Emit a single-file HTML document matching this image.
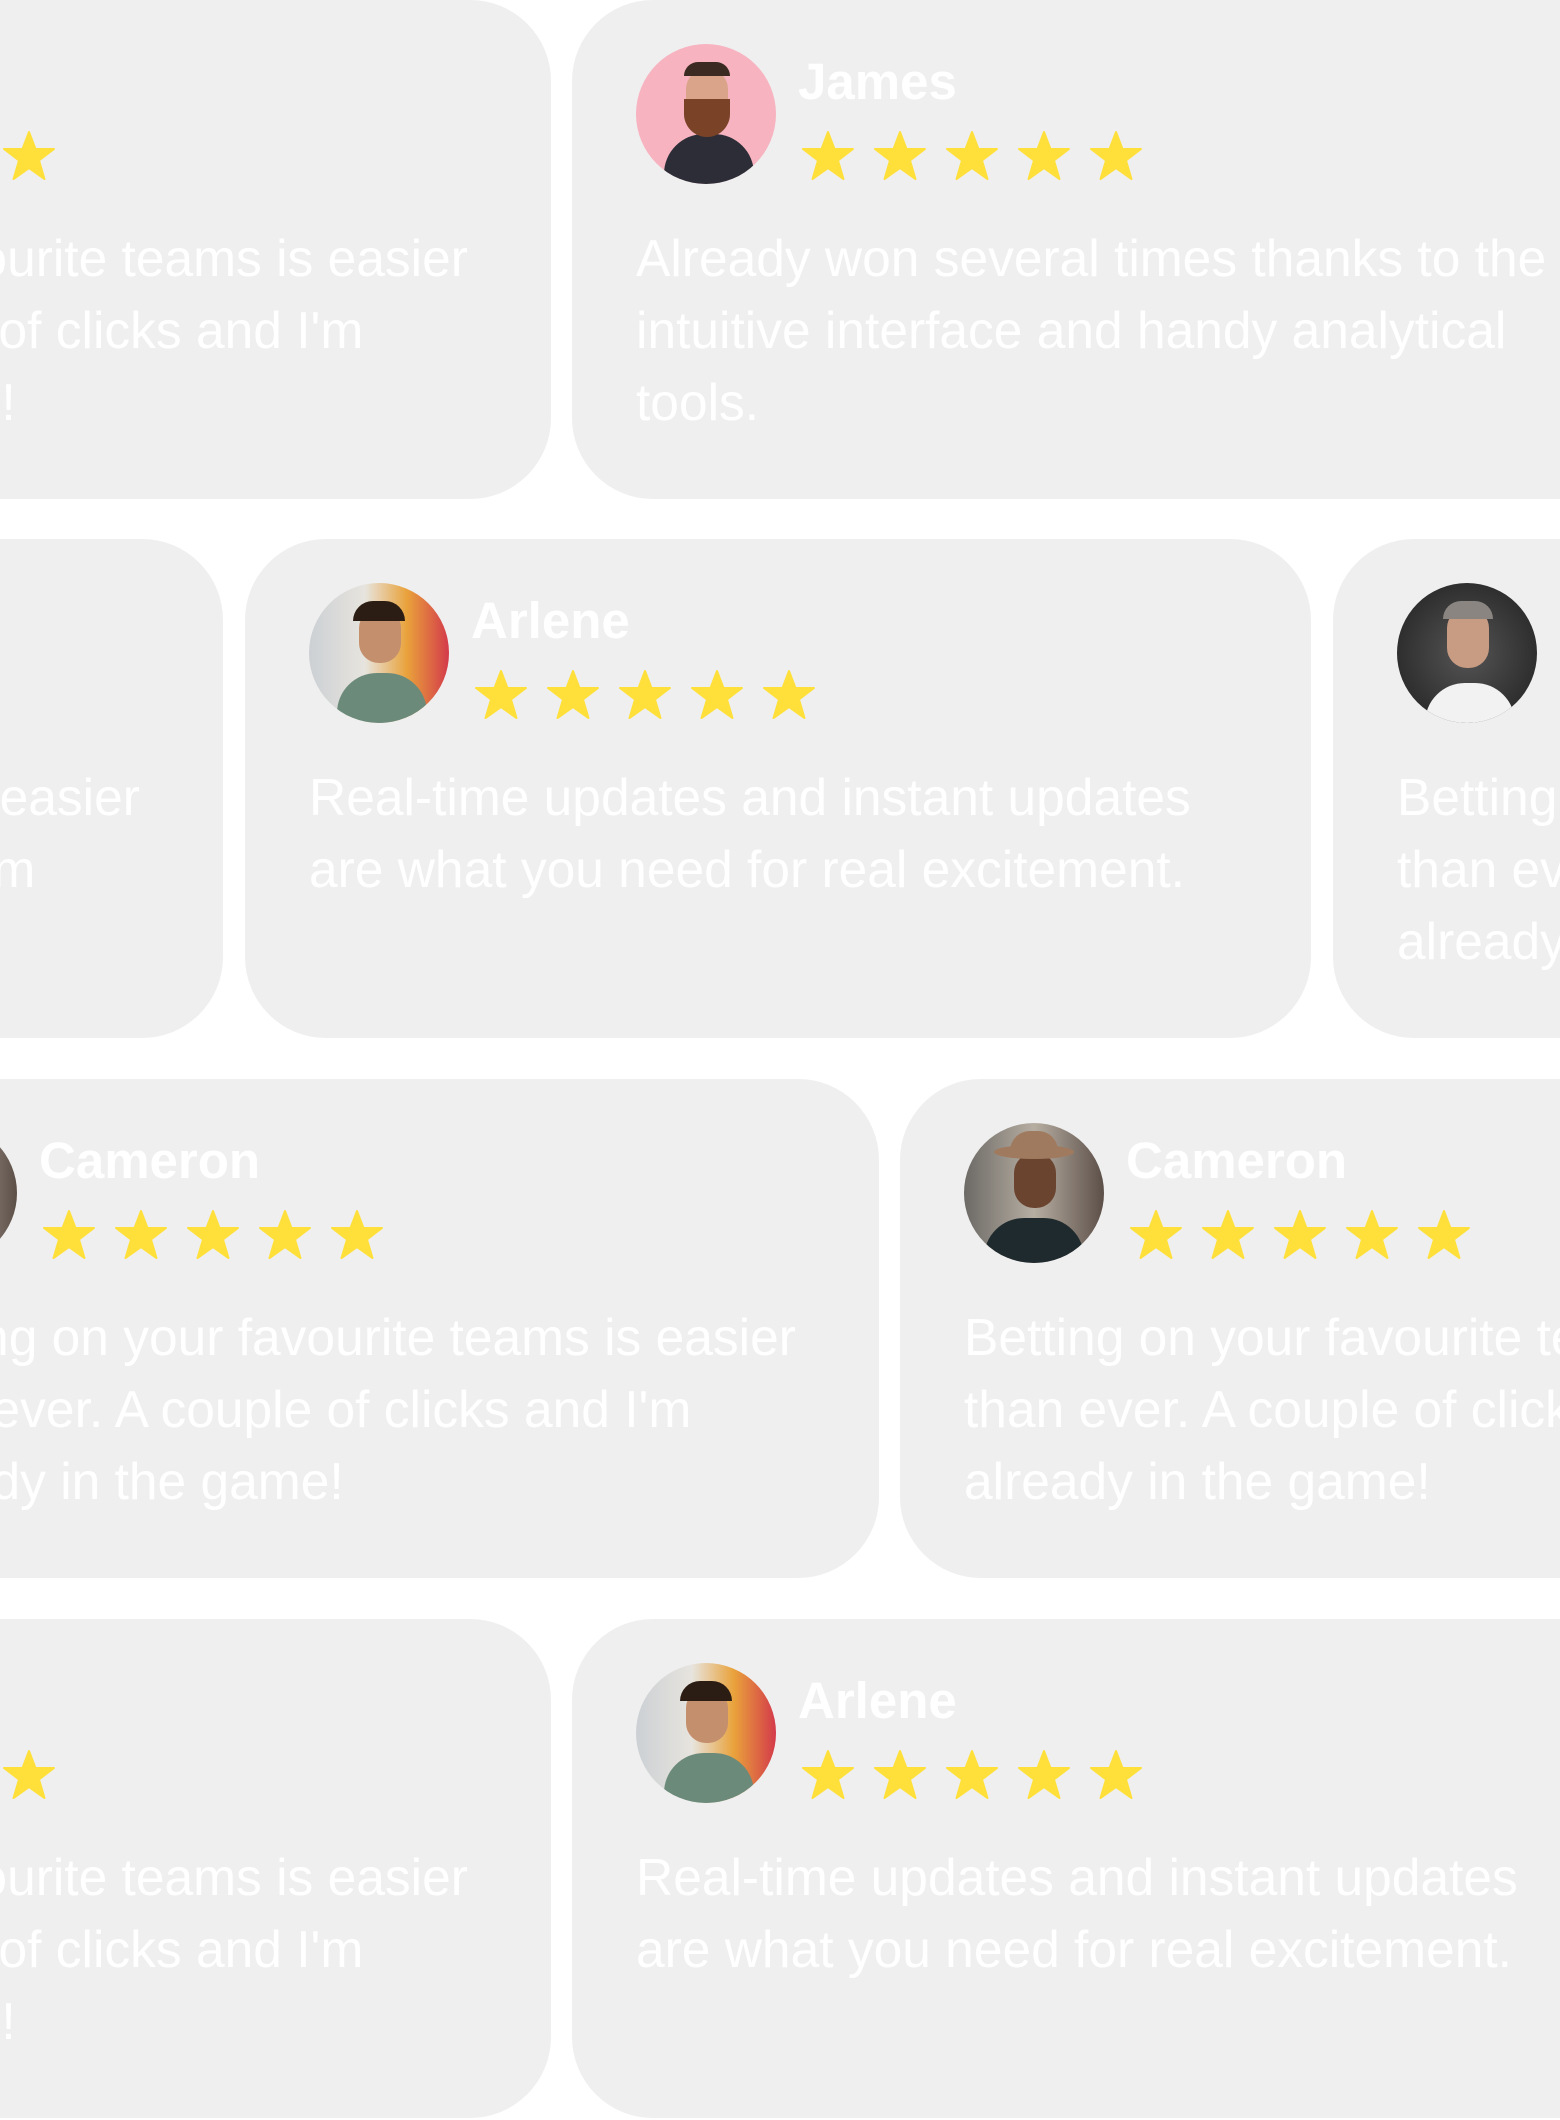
<!DOCTYPE html>
<html><head><meta charset="utf-8"><style>
body{margin:0;width:1560px;height:2120px;background:#fff;overflow:hidden;position:relative;font-family:"Liberation Sans",sans-serif}
#root{position:absolute;left:0;top:0;width:1560px;height:2120px;overflow:hidden}
.c{position:absolute;width:1066px;height:499px;border-radius:81px;background:#efefef;overflow:hidden}
.av{position:absolute;left:64px;top:44px;width:140px;height:140px;border-radius:50%;overflow:hidden}
.n{position:absolute;left:226px;top:52px;font-size:51px;font-weight:bold;color:#fff;line-height:60px}
.s{position:absolute;left:230px;top:131px;height:52px;width:400px}
.t{position:absolute;left:64px;top:222px;font-size:51.5px;line-height:72px;color:#fff;white-space:nowrap}
</style></head><body>
<svg width="0" height="0" style="position:absolute"><defs><g id="st"><polygon points="26,1 32.5,18 51,18 36,29.5 41.5,48 26,37 10.5,48 16,29.5 1,18 19.5,18" fill="#ffe03b" stroke="#ffe03b" stroke-width="2" stroke-linejoin="round"/></g></defs></svg>
<div id="root"></div>
<script>
const S='<svg class="s" viewBox="0 0 400 52">'+[0,72,144,216,288].map(x=>'<use href="#st" x="'+x+'"/>').join('')+'</svg>';
const av={
james:'<div class="av" style="background:#f7b3c0"><div style="position:absolute;left:28px;top:90px;width:90px;height:70px;border-radius:40px 40px 0 0;background:#2c2d36"></div><div style="position:absolute;left:50px;top:25px;width:42px;height:50px;border-radius:20px;background:#d9a48a"></div><div style="position:absolute;left:48px;top:55px;width:46px;height:38px;border-radius:0 0 24px 24px;background:#7a4328"></div><div style="position:absolute;left:48px;top:18px;width:46px;height:14px;border-radius:20px 20px 0 0;background:#3a2a22"></div></div>',
arlene:'<div class="av" style="background:linear-gradient(90deg,#ccd0d4,#e7e4de 40%,#e9a23b 70%,#d43a4a)"><div style="position:absolute;left:28px;top:90px;width:90px;height:60px;border-radius:40px 40px 0 0;background:#6c8a7a"></div><div style="position:absolute;left:50px;top:25px;width:42px;height:55px;border-radius:20px;background:#c48f6d"></div><div style="position:absolute;left:44px;top:18px;width:52px;height:20px;border-radius:24px 24px 0 0;background:#2c1d14"></div></div>',
grey:'<div class="av" style="background:radial-gradient(#555,#1e1e1e)"><div style="position:absolute;left:28px;top:100px;width:90px;height:60px;border-radius:40px 40px 0 0;background:#f2f2f2"></div><div style="position:absolute;left:50px;top:25px;width:42px;height:60px;border-radius:20px;background:#c89b83"></div><div style="position:absolute;left:46px;top:18px;width:50px;height:18px;border-radius:24px 24px 0 0;background:#8a8580"></div></div>',
cameron:'<div class="av" style="background:linear-gradient(90deg,#6c6a66,#b7aea2,#5c4f48)"><div style="position:absolute;left:20px;top:95px;width:100px;height:60px;border-radius:40px 40px 0 0;background:#1f2a2e"></div><div style="position:absolute;left:50px;top:30px;width:42px;height:55px;border-radius:20px;background:#6b4430"></div><div style="position:absolute;left:30px;top:22px;width:80px;height:14px;border-radius:50%;background:#a07a5e"></div><div style="position:absolute;left:46px;top:8px;width:48px;height:20px;border-radius:20px 20px 0 0;background:#a07a5e"></div></div>'
};
const T={
bet:'Betting on your favourite teams is easier<br>than ever. A couple of clicks and I\'m<br>already in the game!',
won:'Already won several times thanks to the<br>intuitive interface and handy analytical<br>tools.',
real:'Real-time updates and instant updates<br>are what you need for real excitement.'
};
const cards=[
[-515,0,'cameron','Cameron','bet'],[572,0,'james','James','won'],
[-843,539,'cameron','Cameron','bet'],[245,539,'arlene','Arlene','real'],[1333,539,'grey','Cameron','bet'],
[-187,1079,'cameron','Cameron','bet'],[900,1079,'cameron','Cameron','bet'],
[-515,1619,'cameron','Cameron','bet'],[572,1619,'arlene','Arlene','real']];
document.getElementById('root').innerHTML=cards.map(c=>'<div class="c" style="left:'+c[0]+'px;top:'+c[1]+'px">'+av[c[2]]+'<div class="n">'+c[3]+'</div>'+S+'<div class="t">'+T[c[4]]+'</div></div>').join('');
</script>
</body></html>
